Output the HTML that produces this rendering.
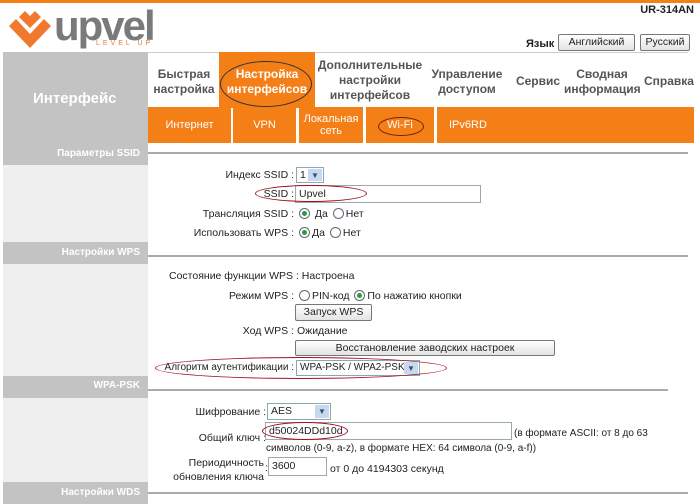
<!DOCTYPE html><html><head><meta charset="utf-8"><style>
*{margin:0;padding:0;box-sizing:border-box}
body{width:700px;height:504px;overflow:hidden;background:#fff;font-family:"Liberation Sans",Arial,sans-serif;font-size:10.5px;color:#222;position:relative}
.a{position:absolute;white-space:nowrap}
.r{text-align:right}
.lh{background:#c3c3c3;color:#fff;font-weight:bold;text-align:right;padding-right:8px}
.tab{position:absolute;top:60px;font-size:12px;font-weight:bold;color:#555;text-align:center;line-height:15px}
.sub{position:absolute;top:107px;height:36px;background:#f57f17;color:#fff;font-size:11px;text-align:center;display:flex;align-items:center;justify-content:center;line-height:12px}
.inp{position:absolute;border:1px solid #9aa;background:#fff;padding:2px 3px;font-size:10.5px}
.sel{position:absolute;border:1px solid #8aa;background:#fff;padding:1px 3px;font-size:10.5px;overflow:hidden}
.sel b{position:absolute;right:1px;top:1px;bottom:1px;width:14px;background:#c8d8f0;color:#356;font-size:8px;text-align:center;line-height:13px}
.btn{position:absolute;border:1px solid #777;border-radius:2px;background:linear-gradient(#fff,#e3e3e3);text-align:center;font-size:10.5px}
.rad{display:inline-block;width:11px;height:11px;border:1px solid #667;border-radius:50%;vertical-align:-2px;position:relative;margin:0 2px}
.rad.on::after{content:"";position:absolute;left:2px;top:2px;width:5px;height:5px;border-radius:50%;background:#2a9a3a}
.ell{position:absolute;border:1px solid #a01020;border-radius:50%}
.hl{position:absolute;height:2px;background:#aaa}
</style></head><body>
<div class="a" style="left:0;top:0;width:700px;height:3px;background:#f57f17"></div>
<svg class="a" style="left:8px;top:8px" width="44" height="44" viewBox="0 0 44 44"><path d="M1 18 L22 40 L43 18 L36 11 L22 26 L8 11 Z" fill="#f0792d"/><path d="M11 9 L22 20 L33 9 L27 3 L22 8 L17 3 Z" fill="#f0792d"/></svg>
<div class="a" style="left:54px;top:4px;font-size:42px;color:#7a7a7a;font-weight:bold;letter-spacing:-2px;line-height:44px">upvel</div>
<div class="a" style="left:96px;top:40px;font-size:7px;color:#e57a30;letter-spacing:3px">LEVEL UP</div>
<div class="a" style="right:6px;top:4px;font-weight:bold;font-size:11px">UR-314AN</div>
<div class="a" style="left:526px;top:38px;font-weight:bold;font-size:11px">Язык</div>
<div class="btn" style="left:558px;top:34px;width:77px;height:17px;line-height:15px">Английский</div>
<div class="btn" style="left:640px;top:34px;width:50px;height:17px;line-height:15px">Русский</div>
<div class="hl" style="left:148px;top:52px;width:540px;height:1px;background:#ccc"></div>
<div class="a" style="left:3px;top:52px;width:145px;height:452px;background:#efefef"></div>
<div class="a" style="left:3px;top:52px;width:145px;height:93px;background:#c3c3c3;color:#fff;font-size:15px;font-weight:bold;line-height:93px;padding-left:30px">Интерфейс</div>
<div class="a lh" style="left:3px;top:145px;width:145px;height:20px;line-height:18px;font-size:10px">Параметры SSID</div>
<div class="a lh" style="left:3px;top:242px;width:145px;height:22px;line-height:22px;font-size:10px">Настройки WPS</div>
<div class="a lh" style="left:3px;top:376px;width:145px;height:22px;line-height:20px;font-size:10px">WPA-PSK</div>
<div class="a lh" style="left:3px;top:482px;width:145px;height:22px;line-height:22px;font-size:10px">Настройки WDS</div>
<div class="a" style="left:219px;top:52px;width:96px;height:56px;background:#f57f17"></div>
<div class="tab" style="left:150px;width:68px;top:67px">Быстрая<br>настройка</div>
<div class="tab" style="left:219px;width:96px;top:67px;color:#fff">Настройка<br>интерфейсов</div>
<div class="tab" style="left:315px;width:110px;top:58px">Дополнительные<br>настройки<br>интерфейсов</div>
<div class="tab" style="left:428px;width:78px;top:67px">Управление<br>доступом</div>
<div class="tab" style="left:513px;width:50px;top:74px">Сервис</div>
<div class="tab" style="left:564px;width:76px;top:67px">Сводная<br>информация</div>
<div class="tab" style="left:640px;width:58px;top:74px">Справка</div>
<div class="ell" style="left:220px;top:61px;width:92px;height:46px;border-color:#333"></div>
<div class="sub" style="left:148px;width:83px">Интернет</div>
<div class="sub" style="left:233px;width:63px">VPN</div>
<div class="sub" style="left:299px;width:64px">Локальная<br>сеть</div>
<div class="sub" style="left:366px;width:68px">Wi-Fi</div>
<div class="sub" style="left:437px;width:257px;justify-content:flex-start;padding-left:12px">IPv6RD</div>
<div class="ell" style="left:378px;top:117px;width:46px;height:19px;border-color:#702010"></div>
<div class="hl" style="left:148px;top:152px;width:540px"></div>
<div class="a r" style="right:406px;top:169px">Индекс SSID :</div>
<div class="sel" style="left:296px;top:167px;width:28px;height:16px">1<b>▼</b></div>
<div class="a r" style="right:406px;top:188px">SSID :</div>
<div class="inp" style="left:295px;top:185px;width:186px;height:18px">Upvel</div>
<div class="ell" style="left:255px;top:185px;width:112px;height:17px"></div>
<div class="a r" style="right:406px;top:208px">Трансляция SSID :</div>
<div class="a" style="left:297px;top:208px"><span class="rad on"></span> Да <span class="rad"></span>Нет</div>
<div class="a r" style="right:406px;top:227px">Использовать WPS :</div>
<div class="a" style="left:297px;top:227px"><span class="rad on"></span>Да <span class="rad"></span>Нет</div>
<div class="hl" style="left:148px;top:255px;width:540px"></div>
<div class="a" style="left:169px;top:270px">Состояние функции WPS : Настроена</div>
<div class="a r" style="right:406px;top:290px">Режим WPS :</div>
<div class="a" style="left:297px;top:290px"><span class="rad"></span>PIN-код <span class="rad on"></span>По нажатию кнопки</div>
<div class="btn" style="left:295px;top:304px;width:77px;height:17px;line-height:15px">Запуск WPS</div>
<div class="a r" style="right:406px;top:325px">Ход WPS :</div>
<div class="a" style="left:297px;top:325px">Ожидание</div>
<div class="btn" style="left:295px;top:340px;width:260px;height:16px;line-height:14px">Восстановление заводских настроек</div>
<div class="a r" style="right:406px;top:362px;font-size:10px">Алгоритм аутентификации :</div>
<div class="sel" style="left:296px;top:360px;width:124px;height:16px;font-size:10px">WPA-PSK / WPA2-PSK<b>▼</b></div>
<div class="ell" style="left:155px;top:357px;width:292px;height:22px"></div>
<div class="hl" style="left:148px;top:389px;width:520px"></div>
<div class="a r" style="right:434px;top:406px">Шифрование :</div>
<div class="sel" style="left:267px;top:403px;width:64px;height:17px">AES<b>▼</b></div>
<div class="a r" style="right:434px;top:432px">Общий ключ :</div>
<div class="inp" style="left:265px;top:422px;width:247px;height:18px">d50024DDd10d</div>
<div class="ell" style="left:262px;top:422px;width:86px;height:18px"></div>
<div class="a" style="left:514px;top:428px;font-size:10px">(в формате ASCII: от 8 до 63</div>
<div class="a" style="left:266px;top:443px;font-size:10px">символов (0-9, a-z), в формате HEX: 64 символа (0-9, a-f))</div>
<div class="a r" style="right:436px;top:456px;line-height:14px">Периодичность<br>обновления ключа</div>
<div class="a" style="left:265px;top:462px">:</div>
<div class="inp" style="left:268px;top:457px;width:59px;height:19px">3600</div>
<div class="a" style="left:330px;top:463px">от 0 до 4194303 секунд</div>
<div class="hl" style="left:148px;top:492px;width:540px"></div>
</body></html>
